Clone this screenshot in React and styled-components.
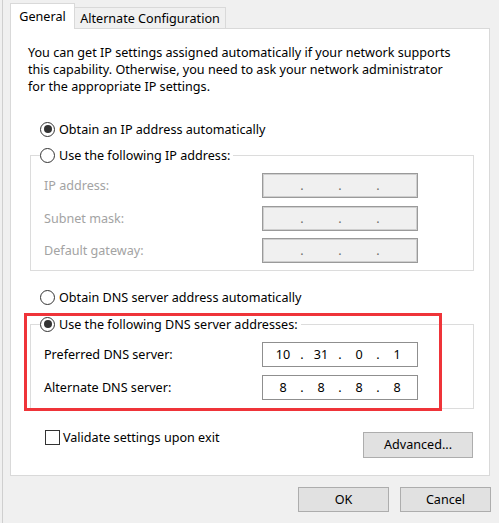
import React from "react";
import styled, { createGlobalStyle, css } from "styled-components";

const GlobalStyle = createGlobalStyle`
  html, body {
    margin: 0;
    padding: 0;
    background: #f0f0f0;
  }
  body {
    font-family: "Noto Sans", "Open Sans", "DejaVu Sans", sans-serif;
    font-size: 12.6px;
    color: #000;
  }
`;

const Window = styled.div`
  width: 497px;
  height: 523px;
  margin-left: 2px;
  padding: 0 9px 0 7px;
  border-left: 1px solid #cfcfcf;
  box-sizing: border-box;
  background: #f0f0f0;
  overflow: hidden;
`;

const TabStrip = styled.div`
  display: flex;
  align-items: flex-end;
  height: 28px;
`;

const Tab = styled.div`
  display: flex;
  align-items: center;
  justify-content: center;
  box-sizing: border-box;
  border: 1px solid #d9d9d9;
  border-bottom: none;
  white-space: nowrap;
  ${({ $active }) =>
    $active
      ? css`
          width: 65px;
          height: 26px;
          margin-bottom: -1px;
          background: #fff;
          position: relative;
          z-index: 1;
        `
      : css`
          width: 151px;
          height: 21px;
          border-left: none;
          background: #f0f0f0;
        `}
`;

const Panel = styled.div`
  height: 448px;
  box-sizing: border-box;
  background: #fff;
  border: 1px solid #d9d9d9;
  display: flex;
  flex-direction: column;
`;

const Intro = styled.p`
  margin: 15px 0 0 17px;
  line-height: 17px;
  white-space: nowrap;
`;

const RadioRow = styled.label`
  display: flex;
  align-items: center;
  height: 20px;
  margin-top: ${({ $top }) => $top || 0}px;
  margin-left: ${({ $left }) => ($left === undefined ? 29 : $left)}px;
  padding-right: ${({ $right }) => $right || 0}px;
  white-space: nowrap;
`;

const RadioCircle = styled.span`
  width: 15px;
  height: 15px;
  box-sizing: border-box;
  border: 1px solid #333;
  border-radius: 50%;
  background: #fff;
  display: flex;
  align-items: center;
  justify-content: center;
  margin-right: 4px;
  flex-shrink: 0;
  &::after {
    content: "";
    width: 8px;
    height: 8px;
    border-radius: 50%;
    background: ${({ $checked }) => ($checked ? "#333" : "transparent")};
  }
`;

const Group = styled.fieldset`
  margin: ${({ $top }) => $top || 0}px 15px 0 19px;
  padding: 0 0 ${({ $bottom }) => $bottom}px 13px;
  border: 1px solid #dcdcdc;
  min-inline-size: 0;
`;

const Legend = styled.legend`
  padding: 0;
  margin-left: -4px;
`;

const Rows = styled.div`
  display: grid;
  grid-template-columns: 218px 156px;
  grid-auto-rows: 25px;
  row-gap: 7.5px;
  margin-top: 8px;
  align-items: center;
`;

const FieldLabel = styled.span`
  color: ${({ $disabled }) => ($disabled ? "#a3a3a3" : "#000")};
  white-space: nowrap;
`;

const IpBox = styled.div`
  height: 25px;
  box-sizing: border-box;
  display: flex;
  align-items: center;
  padding-left: 3px;
  ${({ $disabled }) =>
    $disabled
      ? css`
          background: #f0f0f0;
          border: 1px solid #9a9a9a;
          box-shadow: inset 0 0 0 1px #cfcfcf;
          color: #6d6d6d;
        `
      : css`
          background: #fff;
          border: 1px solid #8f8f8f;
          color: #000;
        `}
`;

const Octet = styled.span`
  width: 34px;
  text-align: center;
`;

const Dot = styled.span`
  width: 4px;
  text-align: center;
`;

const DnsWrap = styled.div`
  position: relative;
  margin-top: 7px;
`;

const Highlight = styled.div`
  position: absolute;
  left: 13px;
  top: -1px;
  width: 418px;
  height: 98px;
  box-sizing: border-box;
  border: 3px solid #ef3439;
  pointer-events: none;
`;

const BottomRow = styled.div`
  display: flex;
  justify-content: space-between;
  align-items: flex-start;
  margin: 21px 16px 0 34px;
`;

const CheckRow = styled.label`
  display: flex;
  align-items: center;
  height: 16px;
  white-space: nowrap;
`;

const CheckBox = styled.span`
  width: 15px;
  height: 15px;
  box-sizing: border-box;
  border: 1px solid #333;
  background: #fff;
  margin-right: 3px;
`;

const Button = styled.button`
  width: ${({ $w }) => $w}px;
  height: ${({ $h }) => $h || 25}px;
  margin-top: ${({ $top }) => $top || 0}px;
  padding: 0;
  background: #e1e1e1;
  border: 1px solid #adadad;
  font: inherit;
  color: #000;
`;

const Footer = styled.div`
  display: flex;
  justify-content: flex-end;
  gap: 11px;
  margin: 11px -1px 0 0;
`;

const Radio = ({ checked, children, ...rest }) => (
  <RadioRow {...rest}>
    <RadioCircle $checked={checked} />
    {children}
  </RadioRow>
);

const IpField = ({ value, disabled }) => {
  const parts = value ? value.split(".") : ["", "", "", ""];
  return (
    <IpBox $disabled={disabled}>
      {parts.map((p, i) => (
        <React.Fragment key={i}>
          {i > 0 && <Dot>.</Dot>}
          <Octet>{p}</Octet>
        </React.Fragment>
      ))}
    </IpBox>
  );
};

export default function App() {
  return (
    <>
      <GlobalStyle />
      <Window>
        <TabStrip>
          <Tab $active>General</Tab>
          <Tab>Alternate Configuration</Tab>
        </TabStrip>
        <Panel>
          <Intro>
            You can get IP settings assigned automatically if your network supports
            <br />
            this capability. Otherwise, you need to ask your network administrator
            <br />
            for the appropriate IP settings.
          </Intro>

          <Radio checked $top={24}>
            Obtain an IP address automatically
          </Radio>

          <Group $top={6} $bottom={7}>
            <Legend>
              <Radio $left={0} $right={3}>
                Use the following IP address:
              </Radio>
            </Legend>
            <Rows>
              <FieldLabel $disabled>IP address:</FieldLabel>
              <IpField disabled />
              <FieldLabel $disabled>Subnet mask:</FieldLabel>
              <IpField disabled />
              <FieldLabel $disabled>Default gateway:</FieldLabel>
              <IpField disabled />
            </Rows>
          </Group>

          <Radio $top={16}>Obtain DNS server address automatically</Radio>

          <DnsWrap>
            <Group $bottom={8}>
              <Legend>
                <Radio checked $left={0} $right={3}>
                  Use the following DNS server addresses:
                </Radio>
              </Legend>
              <Rows>
                <FieldLabel>Preferred DNS server:</FieldLabel>
                <IpField value="10.31.0.1" />
                <FieldLabel>Alternate DNS server:</FieldLabel>
                <IpField value="8.8.8.8" />
              </Rows>
            </Group>
            <Highlight />
          </DnsWrap>

          <BottomRow>
            <CheckRow>
              <CheckBox />
              Validate settings upon exit
            </CheckRow>
            <Button $w={110} $h={26} $top={2}>
              Advanced...
            </Button>
          </BottomRow>
        </Panel>
        <Footer>
          <Button $w={91}>OK</Button>
          <Button $w={91}>Cancel</Button>
        </Footer>
      </Window>
    </>
  );
}
